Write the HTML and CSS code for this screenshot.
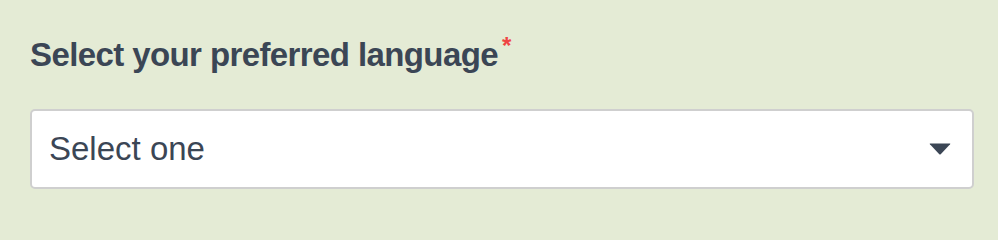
FILE: index.html
```html
<!DOCTYPE html>
<html lang="en">
<head>
<meta charset="utf-8">
<title>Select language</title>
<link rel="stylesheet" href="styles.css">
</head>
<body>
<div class="field">
  <label class="field-label" for="lang">Select your preferred language<span class="required">*</span></label>
  <div class="select" id="lang" role="combobox" aria-expanded="false">
    <span class="select-value">Select one</span>
    <svg class="select-arrow" width="22" height="12" viewBox="0 0 22 12" aria-hidden="true">
      <path d="M1.2 0.5 H20.8 Q21.8 0.5 21.1 1.3 L11.7 11.2 Q11 11.9 10.3 11.2 L0.9 1.3 Q0.2 0.5 1.2 0.5 Z" fill="#3b4655"/>
    </svg>
  </div>
</div>
</body>
</html>
```

FILE: styles.css
```css
html, body {
  margin: 0;
  padding: 0;
  background: #e4ebd5;
}

body {
  font-family: "Liberation Sans", Arial, Helvetica, sans-serif;
  color: #3b4655;
}

.field {
  display: flex;
  flex-direction: column;
  padding: 36px 24px 0 30px;
}

.field-label {
  font-size: 33px;
  font-weight: 700;
  line-height: 38px;
  letter-spacing: -0.6px;
  margin-bottom: 35px;
}

.required {
  color: #ef4444;
  font-size: 24px;
  line-height: 0;
  vertical-align: 12px;
  margin-left: 4px;
  letter-spacing: 0;
}

.select {
  box-sizing: border-box;
  height: 80px;
  display: flex;
  align-items: center;
  justify-content: space-between;
  background: #ffffff;
  border: 2px solid #cfcfcf;
  border-radius: 5px;
  padding: 0 21px 0 17px;
}

.select-value {
  font-size: 33px;
  font-weight: 400;
  line-height: 38px;
}

.select-arrow {
  display: block;
}
```
